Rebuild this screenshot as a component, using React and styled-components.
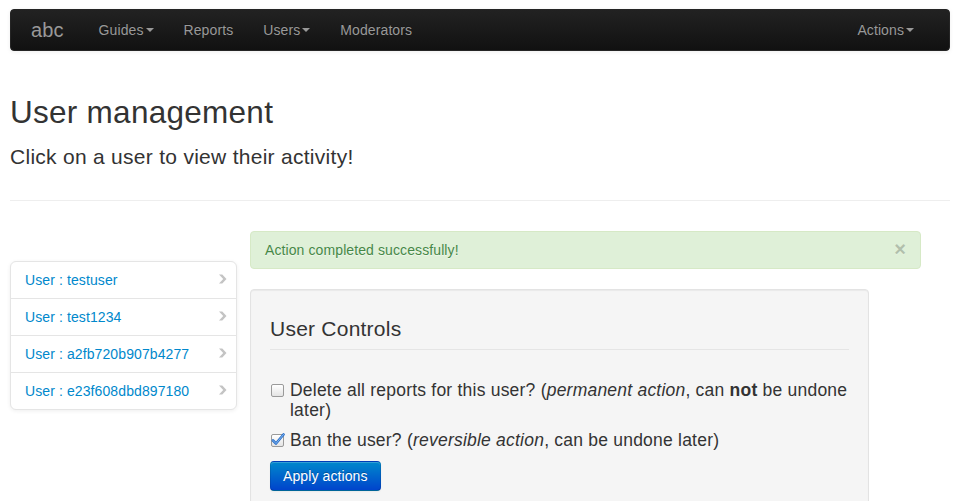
import React, { useState } from 'react';
import styled, { createGlobalStyle } from 'styled-components';

const GlobalStyle = createGlobalStyle`
  html, body {
    margin: 0;
    padding: 0;
    background: #fff;
  }
  body {
    font-family: "Liberation Sans", Arial, sans-serif;
    font-size: 14px;
    line-height: 20px;
    letter-spacing: 0.1px;
    color: #333;
  }
  * {
    box-sizing: border-box;
  }
`;

const Page = styled.div`
  padding: 9px 6px 0 10px;
`;

const Navbar = styled.nav`
  display: flex;
  align-items: center;
  height: 42px;
  padding: 0 20px;
  background-color: #1b1b1b;
  background-image: linear-gradient(to bottom, #222222, #111111);
  border: 1px solid #252525;
  border-radius: 4px;
  box-shadow: 0 1px 4px rgba(0, 0, 0, 0.065);
`;

const Brand = styled.a`
  display: block;
  margin-left: -20px;
  padding: 10px 20px;
  font-size: 20px;
  line-height: 20px;
  color: #999;
  text-decoration: none;
`;

const NavList = styled.ul`
  display: flex;
  margin: 0;
  padding: 0;
  list-style: none;
  margin-left: ${(p) => (p.$right ? 'auto' : '0')};
`;

const NavLink = styled.a`
  display: block;
  padding: 10px 15px;
  color: #999;
  text-decoration: none;
  text-shadow: 0 -1px 0 rgba(0, 0, 0, 0.25);
`;

const Caret = styled.b`
  display: inline-block;
  width: 0;
  height: 0;
  margin-left: 2px;
  margin-top: 8px;
  vertical-align: top;
  border-top: 4px solid #999;
  border-left: 4px solid transparent;
  border-right: 4px solid transparent;
`;

const PageHeader = styled.header`
  margin: 41px 0 30px;
  border-bottom: 1px solid #eee;
`;

const Title = styled.h1`
  margin: 0 0 10px;
  font-size: 31.5px;
  line-height: 40px;
  font-weight: normal;
  letter-spacing: 0.27px;
  color: #333;
`;

const Lead = styled.p`
  margin: 0 0 28px;
  font-size: 21px;
  line-height: 30px;
  font-weight: 200;
  letter-spacing: 0.28px;
`;

const Row = styled.div`
  display: flex;
  align-items: flex-start;
  gap: 13px;
`;

const SideNav = styled.ul`
  width: 227px;
  flex-shrink: 0;
  margin: 30px 0 0;
  padding: 0;
  list-style: none;
  background: #fff;
  border: 1px solid #e5e5e5;
  border-radius: 6px;
  box-shadow: 0 1px 4px rgba(0, 0, 0, 0.065);
  overflow: hidden;
`;

const SideItem = styled.li`
  display: flex;
  justify-content: space-between;
  align-items: flex-start;
  padding: 8px 8px 8px 14px;
  border-top: ${(p) => (p.$first ? 'none' : '1px solid #e5e5e5')};
  color: #0088cc;
  cursor: pointer;
`;

const Chevron = styled.svg`
  width: 14px;
  height: 14px;
  margin-top: 2px;
  flex-shrink: 0;
`;

const Main = styled.div`
  width: 671px;
  display: flex;
  flex-direction: column;
  align-items: flex-start;
`;

const Alert = styled.div`
  position: relative;
  align-self: stretch;
  margin-bottom: 20px;
  padding: 8px 35px 8px 14px;
  color: #468847;
  background: #dff0d8;
  border: 1px solid #d6e9c6;
  border-radius: 4px;
  text-shadow: 0 1px 0 rgba(255, 255, 255, 0.5);
`;

const Close = styled.button`
  position: absolute;
  top: 7px;
  right: 14px;
  padding: 0;
  border: 0;
  background: none;
  font-family: inherit;
  font-size: 20px;
  font-weight: bold;
  line-height: 20px;
  color: #000;
  opacity: 0.2;
  text-shadow: 0 1px 0 #fff;
  cursor: pointer;
`;

const Well = styled.div`
  width: 619px;
  padding: 19px 19px 40px;
  background: #f5f5f5;
  border: 1px solid #e3e3e3;
  border-radius: 4px;
  box-shadow: inset 0 1px 1px rgba(0, 0, 0, 0.05);
`;

const Legend = styled.div`
  margin-bottom: 30px;
  font-size: 21px;
  line-height: 40px;
  letter-spacing: 0.23px;
  color: #333;
  border-bottom: 1px solid #e5e5e5;
`;

const CheckRow = styled.label`
  display: flex;
  align-items: flex-start;
  gap: 6px;
  margin-bottom: 10px;
  font-size: 17.5px;
  line-height: 20px;
  letter-spacing: 0.22px;
  cursor: pointer;

  &:last-of-type {
    margin-bottom: 11px;
  }
`;

const Box = styled.span`
  position: relative;
  flex-shrink: 0;
  width: 13px;
  height: 13px;
  margin: 4px 0 0 1px;
  border: 1px solid #9a9a9a;
  border-radius: 2px;
  background: linear-gradient(to bottom, #ffffff, #e4e4e4);
`;

const Tick = styled.svg`
  position: absolute;
  left: -1px;
  top: -3px;
  width: 14px;
  height: 14px;
`;

const Button = styled.button`
  padding: 4px 12px;
  font-family: inherit;
  font-size: 14px;
  line-height: 20px;
  letter-spacing: 0.1px;
  color: #fff;
  text-shadow: 0 -1px 0 rgba(0, 0, 0, 0.25);
  background-color: #006dcc;
  background-image: linear-gradient(to bottom, #0088cc, #0044cc);
  border: 1px solid rgba(0, 0, 0, 0.1);
  border-bottom-color: rgba(0, 0, 0, 0.25);
  border-radius: 4px;
  box-shadow: inset 0 1px 0 rgba(255, 255, 255, 0.2), 0 1px 2px rgba(0, 0, 0, 0.05);
  cursor: pointer;
`;

const Checkbox = ({ checked, onToggle }) => (
  <Box onClick={onToggle}>
    {checked && (
      <Tick viewBox="0 0 14 14">
        <path
          d="M2 8.5 L5 11.5 L12.5 2.5"
          fill="none"
          stroke="#2a6fc9"
          strokeWidth="2.6"
          strokeLinecap="round"
          strokeLinejoin="round"
        />
        <path
          d="M2 8.5 L5 11.5 L12.5 2.5"
          fill="none"
          stroke="#8fc0f5"
          strokeWidth="0.9"
          strokeLinecap="round"
          strokeLinejoin="round"
        />
      </Tick>
    )}
  </Box>
);

const users = ['testuser', 'test1234', 'a2fb720b907b4277', 'e23f608dbd897180'];

const App = () => {
  const [deleteReports, setDeleteReports] = useState(false);
  const [ban, setBan] = useState(true);

  return (
    <Page>
      <GlobalStyle />
      <Navbar>
        <Brand>abc</Brand>
        <NavList>
          <li>
            <NavLink>Guides<Caret /></NavLink>
          </li>
          <li>
            <NavLink>Reports</NavLink>
          </li>
          <li>
            <NavLink>Users<Caret /></NavLink>
          </li>
          <li>
            <NavLink>Moderators</NavLink>
          </li>
        </NavList>
        <NavList $right>
          <li>
            <NavLink>Actions<Caret /></NavLink>
          </li>
        </NavList>
      </Navbar>

      <PageHeader>
        <Title>User management</Title>
        <Lead>Click on a user to view their activity!</Lead>
      </PageHeader>

      <Row>
        <SideNav>
          {users.map((u, i) => (
            <SideItem key={u} $first={i === 0}>
              <span>User : {u}</span>
              <Chevron viewBox="0 0 14 14">
                <polygon points="5,2.5 8.3,2.5 12.5,7 8.3,11.5 5,11.5 9.2,7" fill="#c4c4c4" />
              </Chevron>
            </SideItem>
          ))}
        </SideNav>

        <Main>
          <Alert>
            Action completed successfully!
            <Close type="button">×</Close>
          </Alert>
          <Well>
            <Legend>User Controls</Legend>
            <CheckRow>
              <Checkbox checked={deleteReports} onToggle={() => setDeleteReports(!deleteReports)} />
              <span>
                Delete all reports for this user? (<i>permanent action</i>, can <b>not</b> be undone later)
              </span>
            </CheckRow>
            <CheckRow>
              <Checkbox checked={ban} onToggle={() => setBan(!ban)} />
              <span>
                Ban the user? (<i>reversible action</i>, can be undone later)
              </span>
            </CheckRow>
            <Button type="button">Apply actions</Button>
          </Well>
        </Main>
      </Row>
    </Page>
  );
};

export default App;
